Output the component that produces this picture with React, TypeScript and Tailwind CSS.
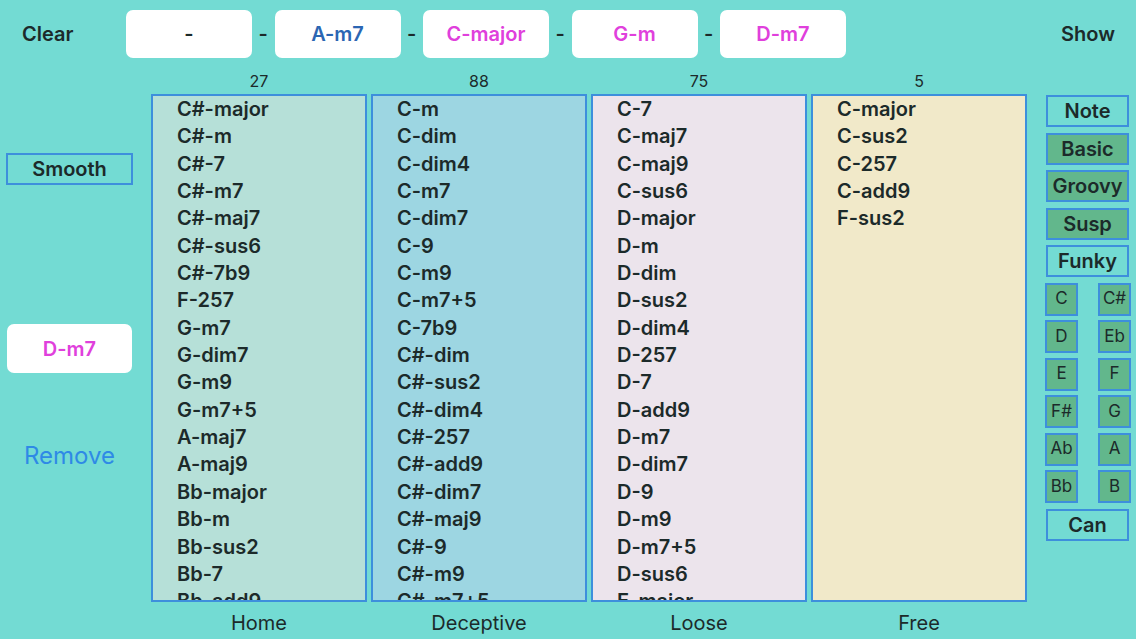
import React from 'react';

const columns = [
  {
    count: 27,
    label: 'Home',
    bg: 'bg-[#b6e0d8]',
    chords: ['C#-major', 'C#-m', 'C#-7', 'C#-m7', 'C#-maj7', 'C#-sus6', 'C#-7b9', 'F-257', 'G-m7', 'G-dim7', 'G-m9', 'G-m7+5', 'A-maj7', 'A-maj9', 'Bb-major', 'Bb-m', 'Bb-sus2', 'Bb-7', 'Bb-add9'],
  },
  {
    count: 88,
    label: 'Deceptive',
    bg: 'bg-[#9dd6e2]',
    chords: ['C-m', 'C-dim', 'C-dim4', 'C-m7', 'C-dim7', 'C-9', 'C-m9', 'C-m7+5', 'C-7b9', 'C#-dim', 'C#-sus2', 'C#-dim4', 'C#-257', 'C#-add9', 'C#-dim7', 'C#-maj9', 'C#-9', 'C#-m9', 'C#-m7+5'],
  },
  {
    count: 75,
    label: 'Loose',
    bg: 'bg-[#ece4ec]',
    chords: ['C-7', 'C-maj7', 'C-maj9', 'C-sus6', 'D-major', 'D-m', 'D-dim', 'D-sus2', 'D-dim4', 'D-257', 'D-7', 'D-add9', 'D-m7', 'D-dim7', 'D-9', 'D-m9', 'D-m7+5', 'D-sus6', 'E-major'],
  },
  {
    count: 5,
    label: 'Free',
    bg: 'bg-[#f1e9c9]',
    chords: ['C-major', 'C-sus2', 'C-257', 'C-add9', 'F-sus2'],
  },
];

const progression = [
  { name: '-', color: 'text-[#1c2a2a]' },
  { name: 'A-m7', color: 'text-[#2b66b3]' },
  { name: 'C-major', color: 'text-[#e040dc]' },
  { name: 'G-m', color: 'text-[#e040dc]' },
  { name: 'D-m7', color: 'text-[#e040dc]' },
];

const notes = [['C', 'C#'], ['D', 'Eb'], ['E', 'F'], ['F#', 'G'], ['Ab', 'A'], ['Bb', 'B']];

// right side style buttons, green = selected
const styles = [
  { name: 'Note', on: false },
  { name: 'Basic', on: true },
  { name: 'Groovy', on: true },
  { name: 'Susp', on: true },
  { name: 'Funky', on: false },
];

export default function App() {
  return (
    <div className="w-[1136px] h-[639px] overflow-hidden bg-[#73dbd3] text-[#1c2a2a] font-['Inter','Liberation_Sans',sans-serif]">
      {/* top bar */}
      <div className="flex items-center h-[68px]">
        <div className="w-[126px] pl-[22px] text-[20px] font-semibold">Clear</div>
        <div className="flex items-center">
          {progression.map((p, i) => (
            <React.Fragment key={i}>
              {i > 0 && <div className="w-[22.5px] text-center text-[20px] font-semibold">-</div>}
              <div className={`w-[126px] h-[48px] rounded-[7px] bg-white flex items-center justify-center text-[20px] font-semibold ${p.color}`}>
                {p.name}
              </div>
            </React.Fragment>
          ))}
        </div>
        <div className="ml-auto pr-[21px] text-[20px] font-semibold">Show</div>
      </div>

      <div className="flex h-[571px]">
        {/* left side */}
        <div className="w-[151px] flex flex-col items-start">
          <div className="mt-[85px] ml-[6px] w-[127px] h-[32px] border-2 border-[#3d8fdc] flex items-center justify-center text-[20px] font-semibold">
            Smooth
          </div>
          <div className="mt-[139px] ml-[7px] w-[125px] h-[49px] rounded-[7px] bg-white flex items-center justify-center text-[20px] font-semibold text-[#e040dc]">
            D-m7
          </div>
          <div className="mt-[65px] w-[139px] text-center text-[24px] text-[#2e8ae6]">Remove</div>
        </div>

        {/* chord columns */}
        <div className="flex gap-[4px]">
          {columns.map((c) => (
            <div key={c.label} className="w-[216px] flex flex-col">
              <div className="h-[26px] flex items-center justify-center text-[16px]">{c.count}</div>
              <div className={`h-[508px] border-2 border-[#3d8fdc] overflow-hidden ${c.bg}`}>
                <div className="pl-[24px]">
                  {c.chords.map((ch) => (
                    <div key={ch} className="h-[27.35px] leading-[27.35px] text-[20px] font-semibold">{ch}</div>
                  ))}
                </div>
              </div>
              <div className="h-[37px] pt-[4px] flex items-center justify-center text-[20px]">{c.label}</div>
            </div>
          ))}
        </div>

        {/* right side */}
        <div className="ml-[18px] w-[86px] pt-[27px] flex flex-col">
          {styles.map((s) => (
            <div
              key={s.name}
              className={`ml-[1px] w-[83px] h-[32px] mb-[5.5px] border-2 border-[#3d8fdc] flex items-center justify-center text-[20px] font-semibold ${s.on ? 'bg-[#62b78c]' : ''}`}
            >
              {s.name}
            </div>
          ))}
          <div className="flex flex-col gap-[4.5px]">
            {notes.map((row) => (
              <div key={row[0]} className="flex justify-between">
                {row.map((n) => (
                  <div key={n} className="w-[33px] h-[33px] border-2 border-[#3d8fdc] bg-[#62b78c] flex items-center justify-center text-[17px]">
                    {n}
                  </div>
                ))}
              </div>
            ))}
          </div>
          <div className="mt-[5.5px] ml-[1px] w-[83px] h-[32px] border-2 border-[#3d8fdc] flex items-center justify-center text-[20px] font-semibold">
            Can
          </div>
        </div>
      </div>
    </div>
  );
}
